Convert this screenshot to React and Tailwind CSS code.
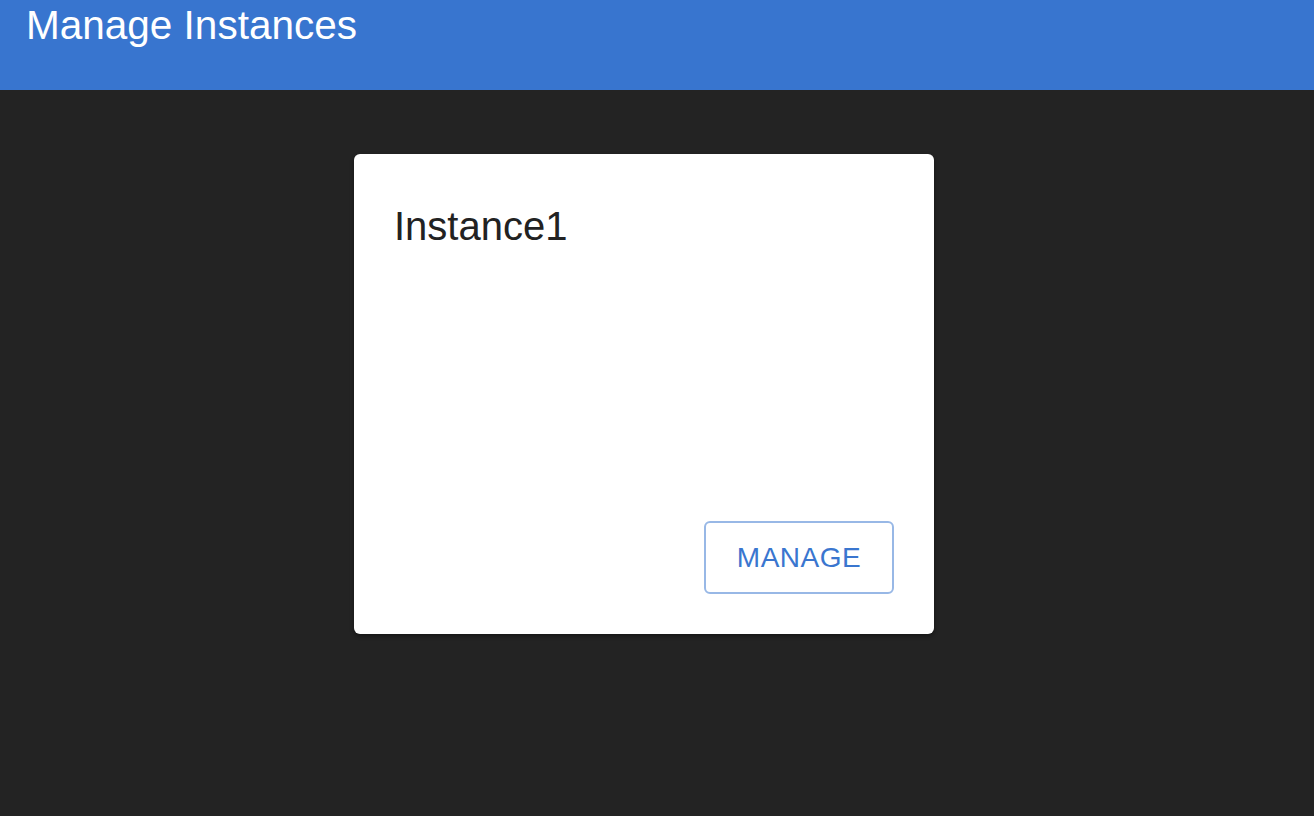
import React from 'react'

function InstanceCard ({ name }) {
  return (
    <section className="flex h-[480px] w-[580px] flex-col justify-between rounded-md bg-white p-10 shadow-[0_2px_4px_rgba(0,0,0,0.4)]">
      <h2 className="text-[40px] leading-[65px] font-normal text-[#222222]">{name}</h2>
      <div className="flex justify-end">
        <button
          type="button"
          className="flex h-[73px] w-[190px] items-center justify-center rounded-md border-2 border-[#98b8e6] text-[28px] tracking-[0.5px] text-[#3a76cf]"
        >
          MANAGE
        </button>
      </div>
    </section>
  )
}

export default function App () {
  return (
    <div className="min-h-[816px] bg-[#232323] font-['Liberation_Sans',Arial,sans-serif]">
      <header className="h-[90px] bg-[#3875cf] px-[26px]">
        <h1 className="text-[40.5px] leading-[50px] text-white">Manage Instances</h1>
      </header>
      <main className="pl-[354px] pt-16">
        <InstanceCard name="Instance1" />
      </main>
    </div>
  )
}
